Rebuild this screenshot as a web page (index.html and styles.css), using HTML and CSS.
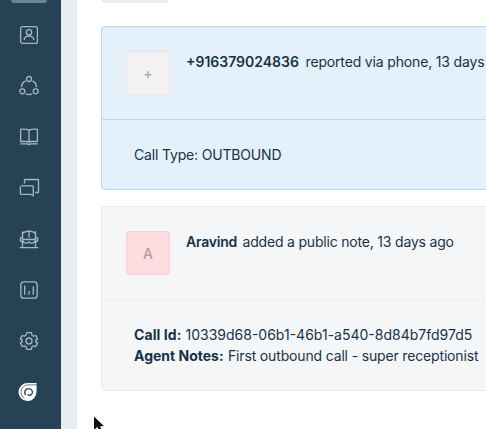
FILE: index.html
```html
<!DOCTYPE html>
<html lang="en">
<head>
<meta charset="utf-8">
<title>Ticket conversation</title>
<link rel="stylesheet" href="styles.css">
</head>
<body>
<div class="app">
  <nav class="sidebar">
    <div class="active-tab"></div>
    <svg class="icon" viewBox="0 0 22 22"><rect x="2.6" y="2.6" width="16.8" height="16.8" rx="2"/><circle cx="11" cy="8.3" r="2.7"/><path d="M6.2 16c0-5.200 9.600-5.200 9.600 0"/></svg>
    <svg class="icon" viewBox="0 0 22 22"><circle cx="11" cy="4" r="2.500"/><circle cx="4.300" cy="16.300" r="2.500"/><circle cx="17.700" cy="16.300" r="2.500"/><path d="M7.500 5.800C4.800 7.200 3.500 9.300 3.500 12.200M14.500 5.800c2.700 1.400 4 3.500 4 6.400M7.800 18.800c2 1.100 4.400 1.100 6.400 0"/></svg>
    <svg class="icon" viewBox="0 0 22 22"><path d="M11 4.200C9 3.200 6 3 2.600 3.300V15.500H9.500L11 16.400l1.500-.9h6.900V3.300C16 3 13 3.200 11 4.200zM11 4.200V16.200M2.300 17.800h7l1.700.8 1.700-.8h7"/></svg>
    <svg class="icon" viewBox="0 0 22 22"><path d="M6.500 6.500V2.500h14v13h-3.300M3 8.800h11.500q.8 0 .8.800v9.200l-2.800-1.500H3.200q-.8 0-.8-.8V9.600"/></svg>
    <svg class="icon" viewBox="0 0 22 22"><path d="M4.500 19V3.200M17.500 19V3.200M4.500 6C7 2.200 15 2.200 17.500 6M11 3v6.500M4.500 11.500h13M5 12.800c.7 3 4.500 3 6 1 1.500 2 5.300 2 6-1M4.500 9.200C1.500 9.200 1.500 14 4.500 14M17.500 9.200c3 0 3 4.800 0 4.800M1.800 19.600h18.400"/></svg>
    <svg class="icon" viewBox="0 0 22 22"><rect x="2.800" y="2.800" width="16.400" height="16.400" rx="3"/><path d="M6.700 6.500v9.300M11 12v3.800M15.300 7.500v8.300"/></svg>
    <svg class="icon" viewBox="0 0 22 22"><path d="M8.700 2.700h4.600l.8 2.700 1.500.8 2.300-.7 1.700 3.600-1.800 1v1.800l1.800 1-1.700 3.600-2.300-.7-1.500.8-.8 2.700H8.700l-.8-2.700-1.500-.8-2.300.7-1.700-3.600 1.800-1v-1.800l-1.800-1 1.700-3.600 2.300.7 1.500-.8z"/><circle cx="11" cy="11" r="3"/></svg>
    <svg class="icon brand" viewBox="0 0 22 22"><path class="brand-fill" d="M18.700 2.100H10.400A9 9 0 1 0 18.500 11z"/><path class="brand-line" d="M19 3.900H10.500C6 3.900 3 7 3 11.200c0 2.800 1.500 5 3.600 6.200"/><path class="brand-line thick" d="M7.600 14.200C5.600 10.800 7.300 7.600 10.500 7.600c3.700 0 5.200 3.700 2.800 6M9.700 13.300c.7 1 2.300 1.200 3.600.3"/></svg>
  </nav>
  <div class="rail"></div>
  <main class="content">
    <div class="pill"></div>
    <article class="card phone">
      <header class="card-head">
        <div class="avatar">+</div>
        <p class="summary"><b class="who number">+916379024836</b><span class="t-reported">reported via phone, 13 days</span></p>
      </header>
      <div class="card-body"><p><span class="t-type">Call Type: OUTBOUND</span></p></div>
    </article>
    <article class="card note">
      <header class="card-head">
        <div class="avatar">A</div>
        <p class="summary"><b class="who name">Aravind</b><span class="t-added">added a public note, 13 days ago</span></p>
      </header>
      <div class="card-body">
        <p><b class="label-id">Call Id:</b><span class="t-id">10339d68-06b1-46b1-a540-8d84b7fd97d5</span></p>
        <p><b class="label-notes">Agent Notes:</b><span class="t-notes">First outbound call - super receptionist</span></p>
      </div>
    </article>
  </main>
</div>
<svg class="pointer" viewBox="0 0 14 15"><path d="M1.500 1.500V17l3.700-3.500L8 20h3.500L8.700 12.700h4.500z"/></svg>
</body>
</html>
```
FILE: styles.css
```css
* { box-sizing: border-box; }
body {
  margin: 0;
  overflow: hidden;
  background: #fff;
  color: #183247;
  font: 14px/21px Inter, "Liberation Sans", sans-serif;
}
p { margin: 0; white-space: nowrap; }
b { font-weight: 600; }
.app { display: flex; height: 429px; }
.sidebar {
  flex: 0 0 61px;
  display: flex;
  flex-direction: column;
  align-items: center;
  gap: 29px;
  background: #264356;
  padding-right: 3px;
}
.active-tab {
  flex: none;
  width: 36px;
  height: 3px;
  margin-bottom: -8px;
  border-radius: 0 0 3px 3px;
  background: #6f818e;
}
.icon {
  flex: none;
  width: 22px;
  height: 22px;
  fill: none;
  stroke: #a9b5be;
  stroke-width: 1.3;
  stroke-linejoin: round;
}
.brand { stroke: none; }
.brand-fill { fill: #fff; }
.brand-line { stroke: #264356; stroke-width: .7; }
.thick { stroke-width: 1.3; }
.rail { flex: 0 0 16px; background: #e9edf2; }
.content { flex: 1; min-width: 0; padding-left: 24px; }
.pill {
  width: 67px;
  height: 3px;
  border-radius: 0 0 4px 4px;
  background: #ebeef2;
}
.card {
  --line: #e8ecf1;
  border: 1px solid var(--line);
  border-right: 0;
  border-radius: 4px 0 0 4px;
}
.phone { --line: #b9d9f5; height: 164px; margin-top: 23px; background: #e4f1fb; }
.note { height: 185px; margin-top: 16px; background: #f4f6f8; }
.card-head {
  display: flex;
  gap: 16px;
  height: 93px;
  padding: 24px 0 0 24px;
  border-bottom: 1px solid var(--line);
}
.avatar {
  flex: none;
  width: 44px;
  height: 44px;
  border: 1px solid #e9e3e3;
  border-radius: 2px;
  background: #f3f1f2;
  color: #a9a7a9;
  font-size: 14px;
  font-weight: 500;
  line-height: 43px;
  text-align: center;
}
.note .avatar { background: #ffdcdf; border-color: #f5d0d4; color: #b69c9d; }
.summary b { display: inline-block; }
.number { width: 119.5px; }
.name { width: 56.5px; letter-spacing: -.22px; }
.card-body { padding: 24px 32px; }
.label-id { display: inline-block; width: 51.5px; font-weight: 700; letter-spacing: .08px; }
.label-notes { display: inline-block; width: 94px; font-weight: 700; }
.t-reported { letter-spacing: -.16px; }
.t-type { letter-spacing: -.17px; }
.t-added { letter-spacing: -.19px; }
.t-notes { letter-spacing: -.16px; }
.pointer {
  position: absolute;
  left: 92px;
  top: 414px;
  width: 14px;
  height: 15px;
  fill: #111;
  stroke: #fff;
  stroke-width: 1;
  overflow: hidden;
}
```
